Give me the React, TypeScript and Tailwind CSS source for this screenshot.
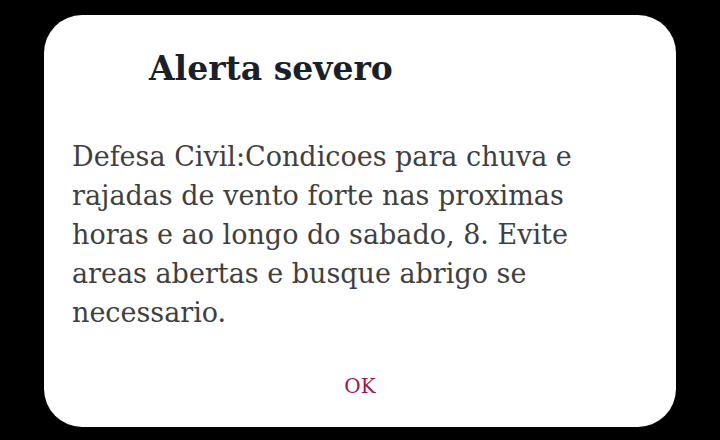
import React from "react";

export default function App() {
  const lines = [
    "Defesa Civil:Condicoes para chuva e",
    "rajadas de vento forte nas proximas",
    "horas e ao longo do sabado, 8. Evite",
    "areas abertas e busque abrigo se",
    "necessario.",
  ];
  return (
    <div className="w-[720px] h-[440px] bg-black pt-[15px] pl-[44px]">
      <div className="w-[632px] h-[412px] bg-white rounded-[38px] flex flex-col" style={{ fontFamily: '"DejaVu Serif", serif' }}>
        <h1 className="pl-[105px] pt-[32px] text-[33px] leading-[44px] font-bold text-[#1b1f29]">
          Alerta severo
        </h1>
        <div className="pl-[28px] pt-[46px] text-[27px] leading-[39px] text-[#3f3f3f]">
          {lines.map((l) => (
            <div key={l} className="whitespace-nowrap">{l}</div>
          ))}
        </div>
        <div className="flex justify-center pt-[40px]">
          <span className="text-[20px] leading-[28px] text-[#a3164a]">OK</span>
        </div>
      </div>
    </div>
  );
}
